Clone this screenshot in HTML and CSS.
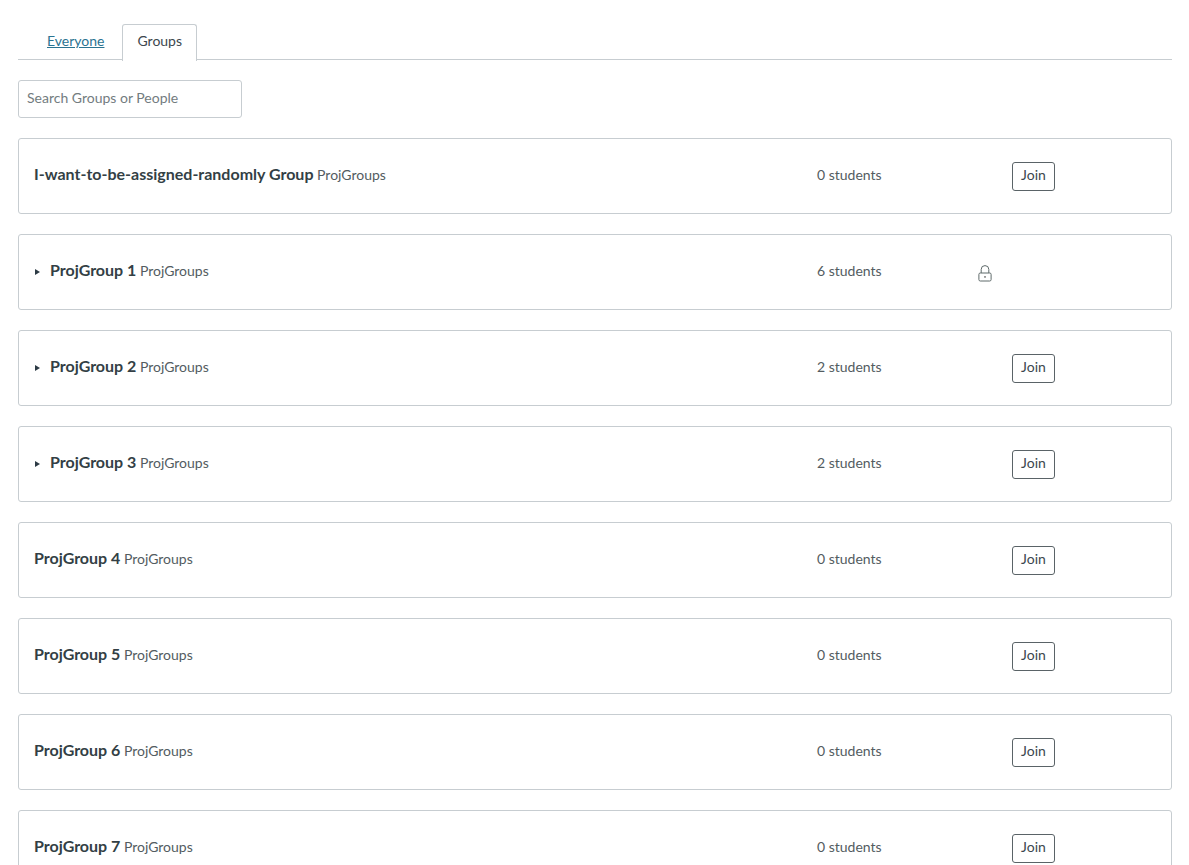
FILE: index.html
```html
<!DOCTYPE html>
<html lang="en">
<head>
<meta charset="utf-8">
<title>Groups</title>
<link rel="stylesheet" href="styles.css">
</head>
<body>
<nav class="tabs">
  <a class="tab" href="#">Everyone</a>
  <a class="tab active" href="#">Groups</a>
</nav>
<input class="search" type="text" placeholder="Search Groups or People">
<div class="list">
  <div class="group">
    <div class="name"><b>I-want-to-be-assigned-randomly Group</b> <span>ProjGroups</span></div>
    <div class="count">0 students</div>
    <div class="action"><button class="join">Join</button></div>
  </div>
  <div class="group">
    <div class="name"><i class="arrow"></i><b>ProjGroup 1</b> <span>ProjGroups</span></div>
    <div class="count">6 students</div>
    <div class="action"><svg class="lock" width="14" height="17" viewBox="0 0 14 17" fill="none" stroke="#5f6a6a" stroke-width="1"><path d="M3.2 8V4.4a3.8 3.8 0 0 1 7.6 0V8"/><rect x=".9" y="8" width="12.2" height="8" rx="1.4"/><path d="M7 11v1.8" stroke="#333"/></svg></div>
  </div>
  <div class="group">
    <div class="name"><i class="arrow"></i><b>ProjGroup 2</b> <span>ProjGroups</span></div>
    <div class="count">2 students</div>
    <div class="action"><button class="join">Join</button></div>
  </div>
  <div class="group">
    <div class="name"><i class="arrow"></i><b>ProjGroup 3</b> <span>ProjGroups</span></div>
    <div class="count">2 students</div>
    <div class="action"><button class="join">Join</button></div>
  </div>
  <div class="group">
    <div class="name"><b>ProjGroup 4</b> <span>ProjGroups</span></div>
    <div class="count">0 students</div>
    <div class="action"><button class="join">Join</button></div>
  </div>
  <div class="group">
    <div class="name"><b>ProjGroup 5</b> <span>ProjGroups</span></div>
    <div class="count">0 students</div>
    <div class="action"><button class="join">Join</button></div>
  </div>
  <div class="group">
    <div class="name"><b>ProjGroup 6</b> <span>ProjGroups</span></div>
    <div class="count">0 students</div>
    <div class="action"><button class="join">Join</button></div>
  </div>
  <div class="group">
    <div class="name"><b>ProjGroup 7</b> <span>ProjGroups</span></div>
    <div class="count">0 students</div>
    <div class="action"><button class="join">Join</button></div>
  </div>
</div>
</body>
</html>
```
FILE: styles.css
```css
html, body { height: 865px; overflow: hidden; }
body {
  margin: 0;
  padding: 24px 17px 0 18px;
  background: #fff;
  font-family: Lato, "Liberation Sans", sans-serif;
  color: #2d3b45;
  box-sizing: border-box;
}
.tabs {
  display: flex;
  height: 35px;
  border-bottom: 1px solid #c7cdd1;
  padding-left: 13px;
  font-size: 14px;
}
.tab {
  display: block;
  height: 35px;
  line-height: 31px;
  padding: 0 15px;
  color: #2a7391;
  text-decoration: underline;
  border: 1px solid transparent;
  border-bottom: none;
}
.active {
  color: #3c474e;
  text-decoration: none;
  background: #fff;
  border-color: #c7cdd1;
  border-radius: 3px 3px 0 0;
  height: 36px;
  padding: 0 14px;
  margin-left: 2px;
}
.search {
  display: block;
  box-sizing: border-box;
  width: 224px;
  height: 38px;
  margin: 20px 0;
  padding: 0 8px 4px;
  border: 1px solid #c7cdd1;
  border-radius: 3px;
  font: 14px Lato, "Liberation Sans", sans-serif;
}
.search::placeholder { color: #737c80; opacity: 1; }
.list { display: flex; flex-direction: column; gap: 20px; }
.group {
  box-sizing: border-box;
  display: flex;
  flex: none;
  align-items: center;
  height: 76px;
  padding: 0 15px;
  border: 1px solid #c7cdd1;
  border-radius: 3px;
}
.name { width: 783px; flex: none; font-size: 14px; color: #535c61; margin-top: -5px; }
.name b { font-size: 16px; font-weight: 700; color: #333f45; }
.arrow {
  display: inline-block;
  width: 0;
  height: 0;
  margin: 0 10px 1px 1px;
  border-left: 5px solid #2d3b45;
  border-top: 3px solid transparent;
  border-bottom: 3px solid transparent;
  vertical-align: middle;
}
.count { width: 161px; flex: none; font-size: 14px; color: #535c61; margin-top: -3px; }
.action { display: flex; align-items: center; }
.action .lock { margin-top: 3px; }
.join {
  box-sizing: border-box;
  width: 43px;
  height: 29px;
  margin-left: 34px;
  padding: 0 0 4px;
  background: #fff;
  border: 1px solid #5a6367;
  border-radius: 3px;
  color: #3c474e;
  font: 14px Lato, "Liberation Sans", sans-serif;
}
```
